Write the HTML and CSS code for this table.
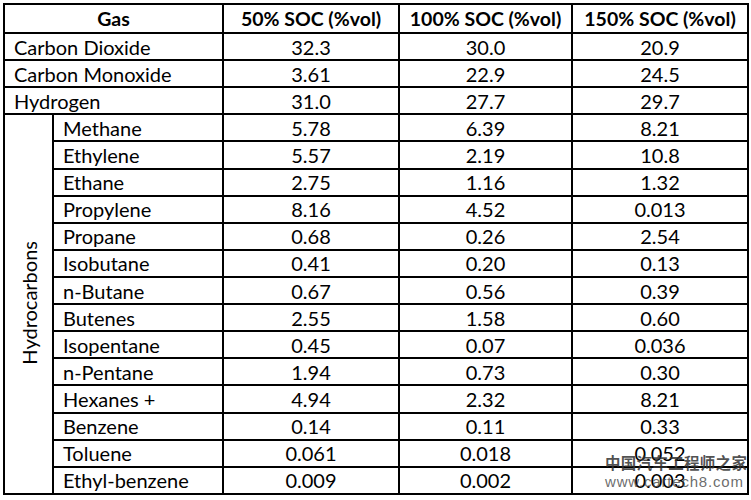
FILE: index.html
```html
<!DOCTYPE html>
<html lang="en">
<head>
<meta charset="utf-8">
<title>Gas composition</title>
<link rel="stylesheet" href="styles.css">
</head>
<body>
<div class="page">
<table class="gas-table">
  <colgroup>
    <col class="c-group">
    <col class="c-name">
    <col class="c-val">
    <col class="c-val2">
    <col class="c-val">
  </colgroup>
  <thead>
    <tr class="head">
      <th colspan="2">Gas</th>
      <th>50% SOC (%vol)</th>
      <th>100% SOC (%vol)</th>
      <th>150% SOC (%vol)</th>
    </tr>
  </thead>
  <tbody>
    <tr><td colspan="2" class="name">Carbon Dioxide</td><td>32.3</td><td>30.0</td><td>20.9</td></tr>
    <tr><td colspan="2" class="name">Carbon Monoxide</td><td>3.61</td><td>22.9</td><td>24.5</td></tr>
    <tr><td colspan="2" class="name">Hydrogen</td><td>31.0</td><td>27.7</td><td>29.7</td></tr>
    <tr><td rowspan="14" class="group"><span class="vert">Hydrocarbons</span></td><td class="name">Methane</td><td>5.78</td><td>6.39</td><td>8.21</td></tr>
    <tr><td class="name">Ethylene</td><td>5.57</td><td>2.19</td><td>10.8</td></tr>
    <tr><td class="name">Ethane</td><td>2.75</td><td>1.16</td><td>1.32</td></tr>
    <tr><td class="name">Propylene</td><td>8.16</td><td>4.52</td><td>0.013</td></tr>
    <tr><td class="name">Propane</td><td>0.68</td><td>0.26</td><td>2.54</td></tr>
    <tr><td class="name">Isobutane</td><td>0.41</td><td>0.20</td><td>0.13</td></tr>
    <tr><td class="name">n-Butane</td><td>0.67</td><td>0.56</td><td>0.39</td></tr>
    <tr><td class="name">Butenes</td><td>2.55</td><td>1.58</td><td>0.60</td></tr>
    <tr><td class="name">Isopentane</td><td>0.45</td><td>0.07</td><td>0.036</td></tr>
    <tr><td class="name">n-Pentane</td><td>1.94</td><td>0.73</td><td>0.30</td></tr>
    <tr><td class="name">Hexanes +</td><td>4.94</td><td>2.32</td><td>8.21</td></tr>
    <tr><td class="name">Benzene</td><td>0.14</td><td>0.11</td><td>0.33</td></tr>
    <tr><td class="name">Toluene</td><td>0.061</td><td>0.018</td><td>0.052</td></tr>
    <tr><td class="name">Ethyl-benzene</td><td>0.009</td><td>0.002</td><td>0.003</td></tr>
  </tbody>
</table>
<div class="watermark">
  <div class="wm-cn">中国汽车工程师之家</div>
  <div class="wm-url">www.cartech8.com</div>
</div>
</div>
</body>
</html>
```
FILE: styles.css
```css
html, body {
  margin: 0;
  padding: 0;
  background: #ffffff;
}

.page {
  position: relative;
  width: 751px;
  height: 500px;
  padding: 3px 0 0 3px;
  box-sizing: border-box;
}

.gas-table {
  border-collapse: collapse;
  table-layout: fixed;
  width: 744px;
  font-family: Lato, "Open Sans", "Liberation Sans", sans-serif;
  font-size: 20px;
  color: #000;
}

.c-group { width: 49px; }
.c-name { width: 170px; }
.c-val { width: 176px; }
.c-val2 { width: 173px; }

.gas-table th,
.gas-table td {
  border: 2px solid #000;
  padding: 0;
  text-align: center;
  vertical-align: middle;
  line-height: 1;
  white-space: nowrap;
}

.gas-table tbody tr {
  height: 27.12px;
}

.gas-table .head {
  height: 29px;
}

.gas-table th {
  font-weight: 700;
  font-size: 19.5px;
}

.gas-table td.name {
  text-align: left;
  padding-left: 9px;
}

.gas-table td.group {
  padding: 0;
}

.vert {
  display: inline-block;
  writing-mode: vertical-rl;
  transform: rotate(180deg);
}

.watermark {
  position: absolute;
  left: 605px;
  top: 452px;
  color: rgba(50, 50, 50, 0.85);
  pointer-events: none;
}

.wm-cn {
  font-family: "Noto Sans CJK SC", sans-serif;
  font-size: 15.5px;
  font-weight: 700;
  line-height: 20px;
  letter-spacing: 0.3px;
}

.wm-url {
  font-family: "Liberation Sans", Arial, sans-serif;
  font-size: 15px;
  line-height: 20px;
  letter-spacing: 0.8px;
  color: rgba(70, 70, 70, 0.8);
}
```
